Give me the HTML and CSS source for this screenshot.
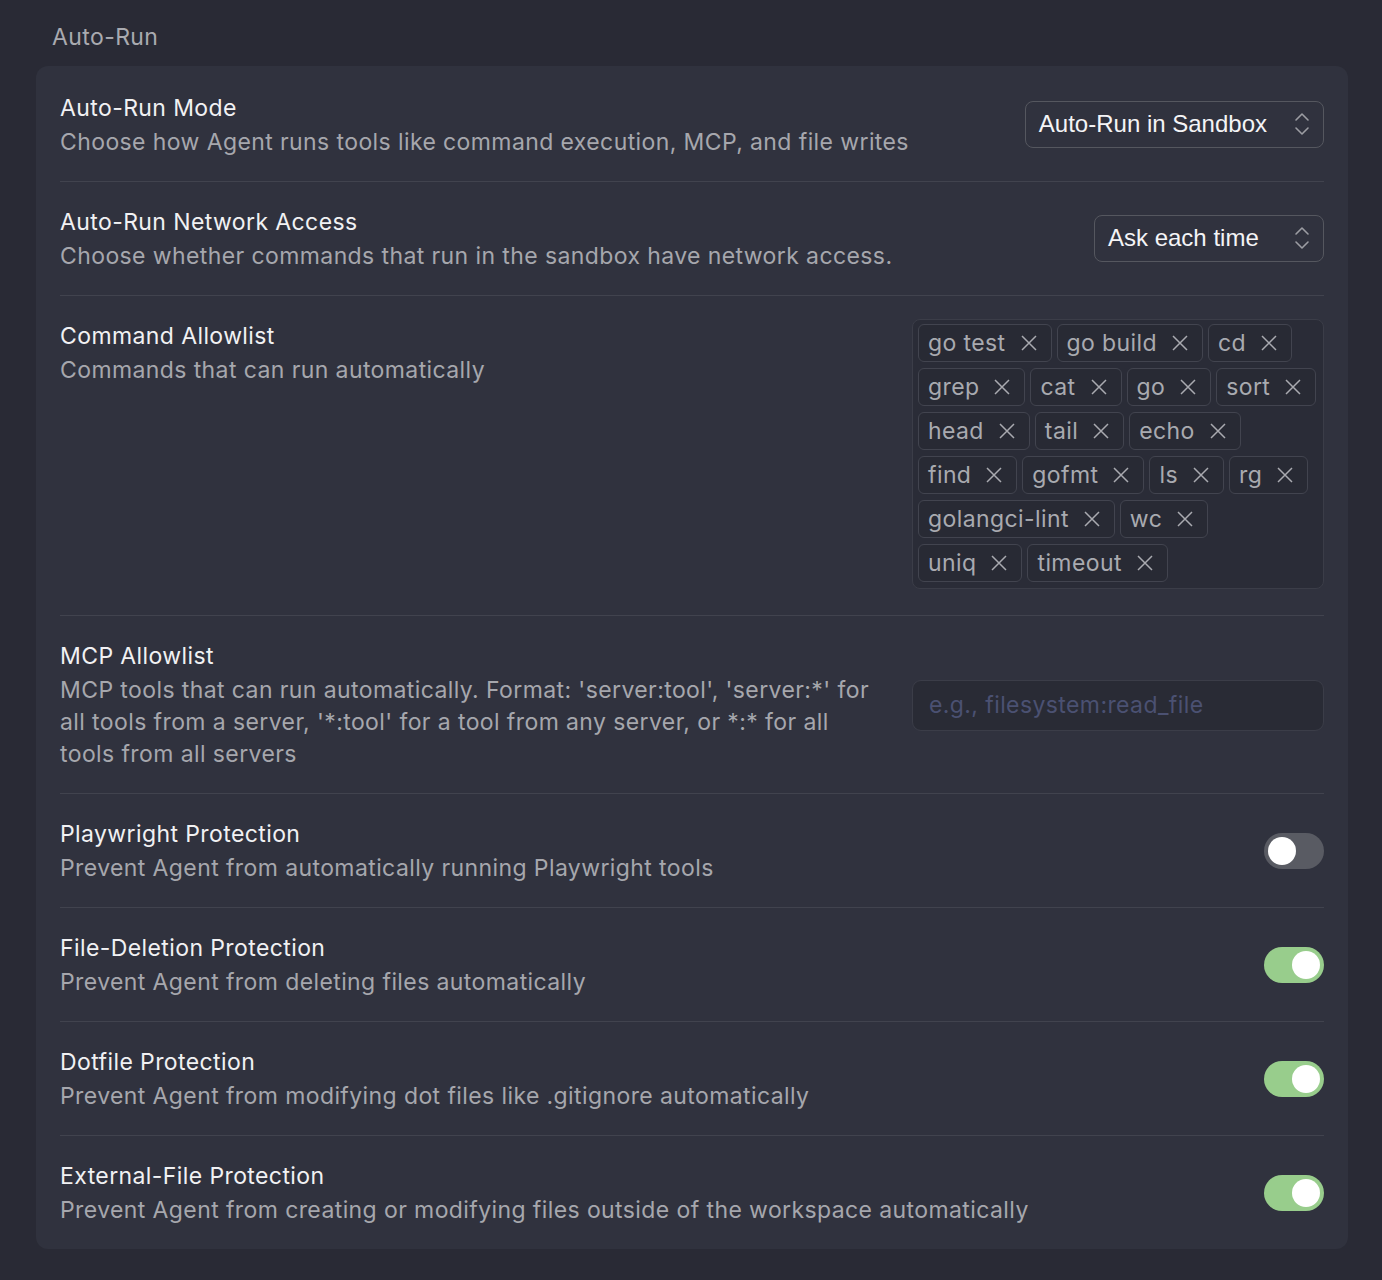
FILE: index.html
```html
<!DOCTYPE html>
<html>
<head>
<meta charset="utf-8">
<link rel="stylesheet" href="styles.css">
</head>
<body>
<div class="page">
  <div class="section-title">Auto-Run</div>
  <div class="card">
    <div class="row">
      <div class="text">
        <div class="title">Auto-Run Mode</div>
        <div class="desc">Choose how Agent runs tools like command execution, MCP, and file writes</div>
      </div>
      <div class="select"><span>Auto-Run in Sandbox</span>
        <svg class="chev" width="16" height="24" viewBox="0 0 16 24"><path d="M2 8 L8 2 L14 8 M2 16 L8 22 L14 16" fill="none" stroke="#9c9da3" stroke-width="1.6" stroke-linecap="round" stroke-linejoin="round"/></svg>
      </div>
    </div>
    <div class="row">
      <div class="text">
        <div class="title">Auto-Run Network Access</div>
        <div class="desc">Choose whether commands that run in the sandbox have network access.</div>
      </div>
      <div class="select select-wide"><span>Ask each time</span>
        <svg class="chev" width="16" height="24" viewBox="0 0 16 24"><path d="M2 8 L8 2 L14 8 M2 16 L8 22 L14 16" fill="none" stroke="#9c9da3" stroke-width="1.6" stroke-linecap="round" stroke-linejoin="round"/></svg>
      </div>
    </div>
    <div class="row top">
      <div class="text">
        <div class="title">Command Allowlist</div>
        <div class="desc">Commands that can run automatically</div>
      </div>
      <div class="tags">
        <div class="tag-line">
          <span class="tag">go test<svg viewBox="0 0 16 16"><path d="M1 1L15 15M15 1L1 15"/></svg></span>
          <span class="tag">go build<svg viewBox="0 0 16 16"><path d="M1 1L15 15M15 1L1 15"/></svg></span>
          <span class="tag">cd<svg viewBox="0 0 16 16"><path d="M1 1L15 15M15 1L1 15"/></svg></span>
        </div>
        <div class="tag-line">
          <span class="tag">grep<svg viewBox="0 0 16 16"><path d="M1 1L15 15M15 1L1 15"/></svg></span>
          <span class="tag">cat<svg viewBox="0 0 16 16"><path d="M1 1L15 15M15 1L1 15"/></svg></span>
          <span class="tag">go<svg viewBox="0 0 16 16"><path d="M1 1L15 15M15 1L1 15"/></svg></span>
          <span class="tag">sort<svg viewBox="0 0 16 16"><path d="M1 1L15 15M15 1L1 15"/></svg></span>
        </div>
        <div class="tag-line">
          <span class="tag">head<svg viewBox="0 0 16 16"><path d="M1 1L15 15M15 1L1 15"/></svg></span>
          <span class="tag">tail<svg viewBox="0 0 16 16"><path d="M1 1L15 15M15 1L1 15"/></svg></span>
          <span class="tag">echo<svg viewBox="0 0 16 16"><path d="M1 1L15 15M15 1L1 15"/></svg></span>
        </div>
        <div class="tag-line">
          <span class="tag">find<svg viewBox="0 0 16 16"><path d="M1 1L15 15M15 1L1 15"/></svg></span>
          <span class="tag">gofmt<svg viewBox="0 0 16 16"><path d="M1 1L15 15M15 1L1 15"/></svg></span>
          <span class="tag">ls<svg viewBox="0 0 16 16"><path d="M1 1L15 15M15 1L1 15"/></svg></span>
          <span class="tag">rg<svg viewBox="0 0 16 16"><path d="M1 1L15 15M15 1L1 15"/></svg></span>
        </div>
        <div class="tag-line">
          <span class="tag">golangci-lint<svg viewBox="0 0 16 16"><path d="M1 1L15 15M15 1L1 15"/></svg></span>
          <span class="tag">wc<svg viewBox="0 0 16 16"><path d="M1 1L15 15M15 1L1 15"/></svg></span>
        </div>
        <div class="tag-line">
          <span class="tag">uniq<svg viewBox="0 0 16 16"><path d="M1 1L15 15M15 1L1 15"/></svg></span>
          <span class="tag">timeout<svg viewBox="0 0 16 16"><path d="M1 1L15 15M15 1L1 15"/></svg></span>
        </div>
      </div>
    </div>
    <div class="row">
      <div class="text">
        <div class="title">MCP Allowlist</div>
        <div class="desc">MCP tools that can run automatically. Format: 'server:tool', 'server:*' for all tools from a server, '*:tool' for a tool from any server, or *:* for all tools from all servers</div>
      </div>
      <input class="input" type="text" placeholder="e.g., filesystem:read_file">
    </div>
    <div class="row">
      <div class="text">
        <div class="title">Playwright Protection</div>
        <div class="desc">Prevent Agent from automatically running Playwright tools</div>
      </div>
      <div class="toggle"><div class="knob"></div></div>
    </div>
    <div class="row">
      <div class="text">
        <div class="title">File-Deletion Protection</div>
        <div class="desc">Prevent Agent from deleting files automatically</div>
      </div>
      <div class="toggle on"><div class="knob"></div></div>
    </div>
    <div class="row">
      <div class="text">
        <div class="title">Dotfile Protection</div>
        <div class="desc">Prevent Agent from modifying dot files like .gitignore automatically</div>
      </div>
      <div class="toggle on"><div class="knob"></div></div>
    </div>
    <div class="row">
      <div class="text">
        <div class="title">External-File Protection</div>
        <div class="desc">Prevent Agent from creating or modifying files outside of the workspace automatically</div>
      </div>
      <div class="toggle on"><div class="knob"></div></div>
    </div>
  </div>
</div>
</body>
</html>
```
FILE: styles.css
```css
html, body {
  margin: 0;
  padding: 0;
  background: #292a35;
}
body {
  font-family: Inter, "Noto Sans", sans-serif;
  font-size: 23px;
  letter-spacing: 0.4px;
  color: #ececee;
}
.page {
  padding: 21px 34px 32px 36px;
}
.section-title {
  color: #a9aab0;
  line-height: 32px;
  padding-left: 16px;
  margin-bottom: 13px;
}
.card {
  background: #30323e;
  border-radius: 12px;
  padding: 2px 24px 0;
}
.row {
  display: flex;
  align-items: center;
  gap: 24px;
  padding: 24px 0 23px;
  border-bottom: 1px solid #41434e;
}
.row:last-child {
  border-bottom: none;
}
.row.top {
  align-items: flex-start;
}
.text {
  flex: 1;
  min-width: 0;
}
.title {
  line-height: 32px;
  color: #f1f1f3;
  margin-bottom: 2px;
}
.desc {
  line-height: 32px;
  color: #a6a7ad;
}
.select {
  flex-shrink: 0;
  display: flex;
  align-items: center;
  justify-content: space-between;
  box-sizing: border-box;
  height: 47px;
  margin-top: -2px;
  border: 1px solid #55575f;
  border-radius: 8px;
  padding: 0 13px 0 13px;
  font-family: "Liberation Sans", Arial, sans-serif;
  font-size: 24px;
  letter-spacing: 0;
  color: #f4f4f6;
}
.select .chev {
  margin-left: 27px;
}
.select-wide {
  width: 230px;
}
.tags {
  flex-shrink: 0;
  box-sizing: border-box;
  width: 412px;
  display: flex;
  flex-direction: column;
  gap: 6px;
  padding: 4px 5px 6px;
  margin: -1px 0 3px;
  background: #2a2c37;
  border: 1px solid #3b3d48;
  border-radius: 8px;
}
.tag-line {
  display: flex;
  gap: 5px;
}
.tag {
  display: flex;
  align-items: center;
  height: 36px;
  padding: 0 14px 0 9px;
  border: 1px solid #42444f;
  border-radius: 6px;
  background: #282a34;
  color: #a9aab0;
  line-height: 36px;
  white-space: nowrap;
}
.tag svg {
  width: 16px;
  height: 16px;
  margin-left: 15px;
  fill: none;
  stroke: #a9aab0;
  stroke-width: 1.5;
}
.input {
  flex-shrink: 0;
  box-sizing: border-box;
  width: 412px;
  height: 51px;
  background: #292b35;
  border: 1px solid #3b3d48;
  border-radius: 9px;
  padding: 0 16px;
  font-family: Inter, "Noto Sans", sans-serif;
  font-size: 23px;
  letter-spacing: 0.4px;
  color: #e0e0e0;
  outline: none;
}
.input::placeholder {
  color: #4b5172;
}
.toggle {
  flex-shrink: 0;
  width: 60px;
  height: 36px;
  border-radius: 18px;
  background: #595b63;
  position: relative;
}
.toggle .knob {
  position: absolute;
  top: 4px;
  left: 4px;
  width: 28px;
  height: 28px;
  border-radius: 50%;
  background: #ffffff;
}
.toggle.on {
  background: #98cd8c;
}
.toggle.on .knob {
  left: 28px;
}
```
